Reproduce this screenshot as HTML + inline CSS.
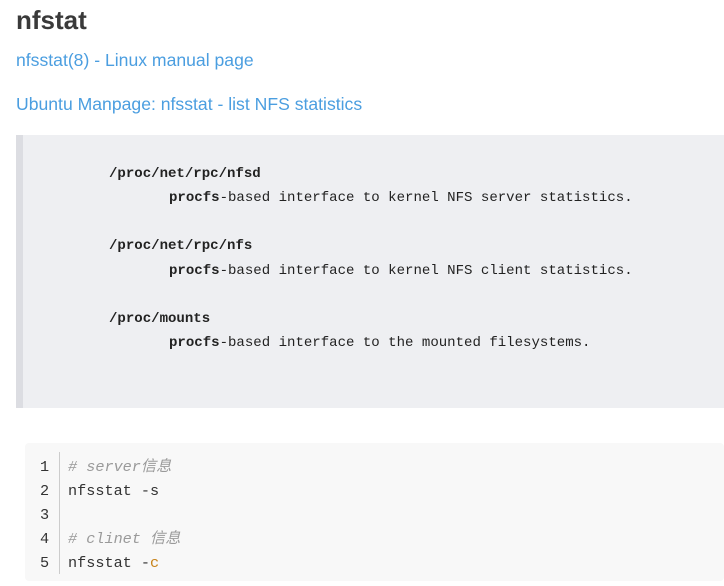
<!DOCTYPE html>
<html><head><meta charset="utf-8"><style>
body{margin:0;background:#fff;width:724px;height:586px;overflow:hidden;font-family:"Liberation Sans",sans-serif;position:relative}
.a{position:absolute;white-space:pre}
h1{position:absolute;left:16px;top:5px;margin:0;font-size:26px;font-weight:bold;color:#3a3a3a}
.l{color:#4b9ee0;font-size:17.6px}
.bq{position:absolute;left:16px;top:135px;width:701px;height:273px;background:#eeeff2;border-left:7px solid #dcdde2}
.m{font-family:"Liberation Mono",monospace;font-size:14.05px;color:#222}
.cb{position:absolute;left:25px;top:443px;width:699px;height:138px;background:#f8f8f8;border-radius:4px}
.c{font-family:"Liberation Mono","Noto Sans CJK SC",monospace;font-size:15.2px;color:#333}
.cm{color:#9a9a9a;font-style:italic}
</style></head><body>
<h1>nfstat</h1>
<div class="a l" style="left:16px;top:50px">nfsstat(8) - Linux manual page</div>
<div class="a l" style="left:16px;top:94px">Ubuntu Manpage: nfsstat - list NFS statistics</div>
<div class="bq"></div>
<div class="a m" style="left:109px;top:166px"><b>/proc/net/rpc/nfsd</b></div>
<div class="a m" style="left:169px;top:190px"><b>procfs</b>-based interface to kernel NFS server statistics.</div>
<div class="a m" style="left:109px;top:238px"><b>/proc/net/rpc/nfs</b></div>
<div class="a m" style="left:169px;top:263px"><b>procfs</b>-based interface to kernel NFS client statistics.</div>
<div class="a m" style="left:109px;top:311px"><b>/proc/mounts</b></div>
<div class="a m" style="left:169px;top:335px"><b>procfs</b>-based interface to the mounted filesystems.</div>
<div class="cb"></div>
<div class="a" style="left:59px;top:452px;width:1px;height:122px;background:#ccc"></div>
<div class="a c" style="left:40px;top:455px;line-height:24px;color:#333">1
2
3
4
5</div>
<div class="a c" style="left:68px;top:455px;line-height:24px"><span class="cm"># server信息</span>
nfsstat -s

<span class="cm"># clinet 信息</span>
nfsstat -<span style="color:#c7831a">c</span></div>
</body></html>
